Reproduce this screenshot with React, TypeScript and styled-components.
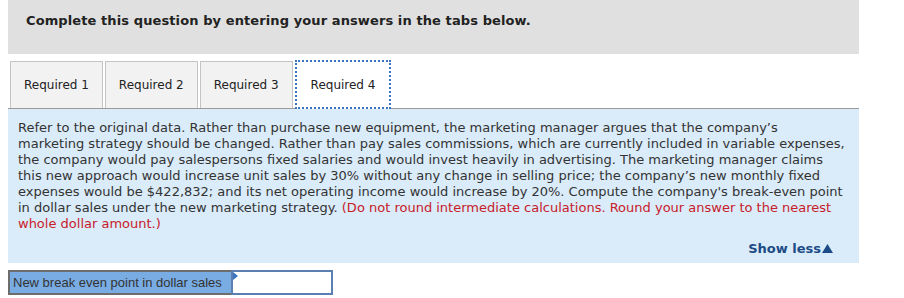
import React from "react";
import styled, { createGlobalStyle } from "styled-components";

const Global = createGlobalStyle`
  body { margin: 0; padding: 0; background: #fff; font-family: "DejaVu Sans", Verdana, sans-serif; }
`;

const Page = styled.div`
  width: 851px;
  margin-left: 8px;
  display: flex;
  flex-direction: column;
`;

const Header = styled.div`
  background: #e0e0e0;
  height: 54px;
  padding: 13px 18px 0 18px;
  box-sizing: border-box;
  font-weight: bold;
  font-size: 13px;
  line-height: 16px;
  letter-spacing: 0.1px;
  color: #222;
`;

const TabBar = styled.div`
  display: flex;
  align-items: flex-end;
  gap: 2px;
  margin-top: 6px;
  padding-left: 2px;
  border-bottom: 1px solid #9a9a9a;
  height: 49px;
  box-sizing: border-box;
`;

const Tab = styled.div<{ $active?: boolean }>`
  height: ${(p) => (p.$active ? "49px" : "47px")};
  margin-bottom: ${(p) => (p.$active ? "-1px" : "0")};
  box-sizing: border-box;
  padding: 0 ${(p) => (p.$active ? "14px" : "13px")};
  display: flex;
  align-items: center;
  font-size: 12px;
  color: #222;
  background: ${(p) => (p.$active ? "#fff" : "#f2f2f2")};
  border: ${(p) => (p.$active ? "2px dotted #3a74c0" : "1px solid #c4c4c4")};
  ${(p) => (p.$active ? "" : "border-bottom: none;")}
`;

const Panel = styled.div`
  background: #daebf9;
  padding: 11px 10px 8px 10px;
  display: flex;
  flex-direction: column;
  height: 154px;
  box-sizing: border-box;
`;

const Prompt = styled.p`
  margin: 0;
  font-size: 13px;
  line-height: 16px;
  color: #333;
  white-space: nowrap;
`;

const Hint = styled.span`
  color: #c8202a;
`;

const ShowLess = styled.div`
  margin-top: auto;
  align-self: flex-end;
  padding-right: 16px;
  margin-bottom: -1px;
  font-size: 13px;
  font-weight: bold;
  color: #1d4b86;
  display: flex;
  align-items: center;
  gap: 1px;
`;

const AnswerRow = styled.div`
  display: flex;
  margin-top: 7px;
  height: 25px;
`;

const Label = styled.div`
  width: 223px;
  box-sizing: border-box;
  background: #78ace2;
  border: 2px solid #6d6d6d;
  border-right: none;
  display: flex;
  align-items: center;
  padding-left: 3px;
  font-family: "Liberation Sans", Arial, sans-serif;
  font-size: 13px;
  color: #333;
`;

const InputWrap = styled.div`
  position: relative;
  width: 102px;
  box-sizing: border-box;
  border: 2px solid #5a7fb0;
  background: #fff;
`;

const Marker = styled.span`
  position: absolute;
  left: 0;
  top: 0;
  width: 0;
  height: 0;
  border-top: 4px solid transparent;
  border-bottom: 4px solid transparent;
  border-left: 5px solid #3a74c0;
`;

const Input = styled.input`
  border: none;
  outline: none;
  width: 100%;
  height: 100%;
  box-sizing: border-box;
  background: transparent;
`;

export default function App() {
  const lines = [
    "Refer to the original data. Rather than purchase new equipment, the marketing manager argues that the company\u2019s",
    "marketing strategy should be changed. Rather than pay sales commissions, which are currently included in variable expenses,",
    "the company would pay salespersons fixed salaries and would invest heavily in advertising. The marketing manager claims",
    "this new approach would increase unit sales by 30% without any change in selling price; the company\u2019s new monthly fixed",
    "expenses would be $422,832; and its net operating income would increase by 20%. Compute the company's break-even point",
  ];
  return (
    <>
      <Global />
      <Page>
        <Header>Complete this question by entering your answers in the tabs below.</Header>
        <TabBar>
          <Tab>Required 1</Tab>
          <Tab>Required 2</Tab>
          <Tab>Required 3</Tab>
          <Tab $active>Required 4</Tab>
        </TabBar>
        <Panel>
          <Prompt>
            {lines.map((l, i) => (
              <React.Fragment key={i}>
                {l}
                <br />
              </React.Fragment>
            ))}
            in dollar sales under the new marketing strategy.{" "}
            <Hint>
              (Do not round intermediate calculations. Round your answer to the nearest
              <br />
              whole dollar amount.)
            </Hint>
          </Prompt>
          <ShowLess>
            Show less
            <svg width="11" height="9" viewBox="0 0 11 9">
              <path d="M5.5 0 L11 9 L0 9 Z" fill="#1d4b86" />
            </svg>
          </ShowLess>
        </Panel>
        <AnswerRow>
          <Label>New break even point in dollar sales</Label>
          <InputWrap>
            <Marker />
            <Input aria-label="answer" />
          </InputWrap>
        </AnswerRow>
      </Page>
    </>
  );
}
